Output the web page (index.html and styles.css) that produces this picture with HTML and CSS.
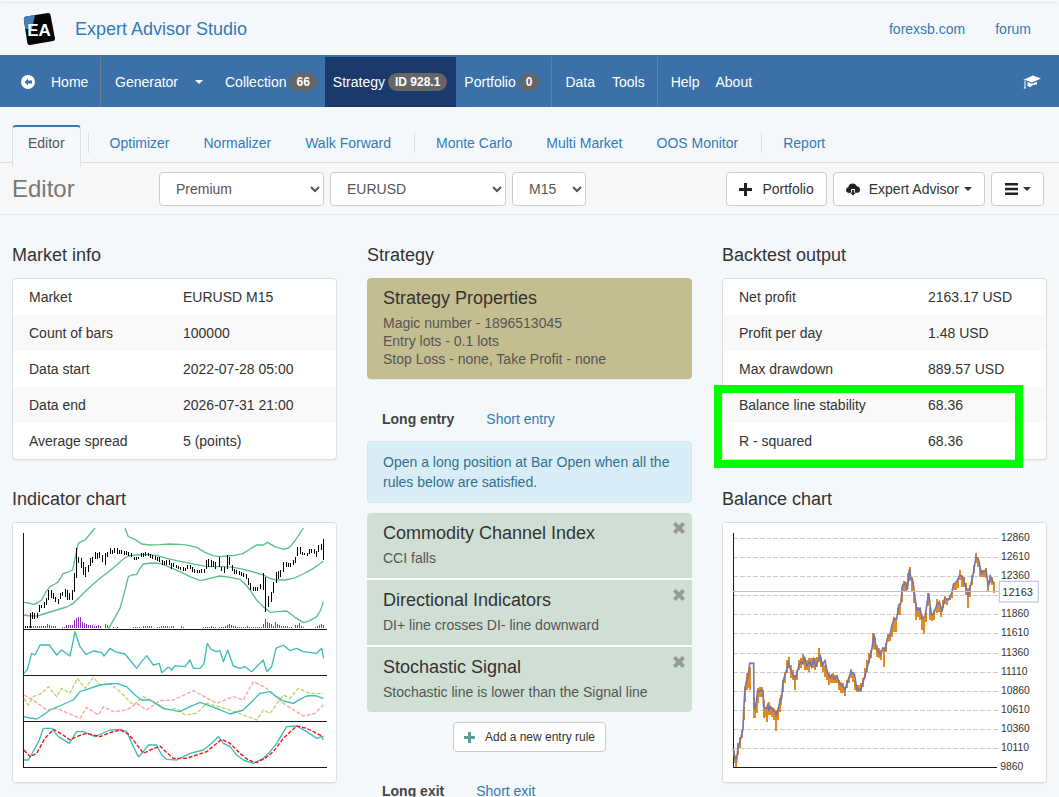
FILE: index.html
```html
<!DOCTYPE html>
<html lang="en">
<head>
  <meta charset="UTF-8">
  <meta name="viewport" content="width=device-width, initial-scale=1.0">
  <title>Expert Advisor Studio</title>
  <link rel="stylesheet" href="styles.css">
</head>
<body>
  <div class="header">
    <svg class="logo" width="34" height="36" viewBox="0 0 34 36">
      <path d="M4 5.500 L26 2 Q28 1.700 28.500 4 L33 27.500 Q33.300 29.500 31 30 L8 34 Q5.800 34.300 5.300 32 L1.800 8 Q1.600 6 4 5.500 Z" fill="#050505"/>
      <path d="M4 5.500 L13 4 L10 18 L3.400 18 L1.800 8 Q1.600 6 4 5.500 Z" fill="#4a7fb5"/>
      <text x="17" y="24.500" class="logo-text">EA</text>
    </svg>
    <a class="brand" href="#">Expert Advisor Studio</a>
    <a class="header-link" href="#">forexsb.com</a>
    <a class="header-link" href="#">forum</a>
  </div>

  <div class="nav">
    <a class="nav-home" href="#">
      <svg width="14" height="14" viewBox="0 0 14 14">
        <circle cx="7" cy="7" r="7" fill="#fff"/>
        <path d="M7 3.500 L3.500 7 L7 10.500 V8.400 H11 V5.600 H7 Z" fill="#3b71a8"/>
      </svg>
      Home
    </a>
    <a class="nav-generator" href="#">Generator <span class="nav-caret"></span></a>
    <a class="nav-item" href="#">Collection <span class="badge">66</span></a>
    <a class="nav-item active" href="#">Strategy <span class="badge">ID 928.1</span></a>
    <a class="nav-item nav-end" href="#">Portfolio <span class="badge">0</span></a>
    <a class="nav-item nav-data" href="#">Data</a>
    <a class="nav-item nav-tools" href="#">Tools</a>
    <a class="nav-item nav-help" href="#">Help</a>
    <a class="nav-item nav-about" href="#">About</a>
    <svg class="nav-cap" width="18" height="14" viewBox="0 0 18 14">
      <path d="M0 5 L10 0.500 L18 3.500 L9 7.500 L3 5.300 Z" fill="#fff"/>
      <path d="M4.500 7 L9 8.800 L14 6.800 V9.600 Q10 9.500 7 12 L4.500 11 Z" fill="#fff"/>
      <path d="M1.500 5.500 V12 L0.500 13.500 H3 L2.500 12 V6 Z" fill="#fff"/>
    </svg>
  </div>

  <div class="tabs">
    <a class="tab active" href="#">Editor</a>
    <span class="tab-sep"></span>
    <a class="tab" href="#">Optimizer</a>
    <a class="tab" href="#">Normalizer</a>
    <a class="tab" href="#">Walk Forward</a>
    <span class="tab-sep"></span>
    <a class="tab" href="#">Monte Carlo</a>
    <a class="tab" href="#">Multi Market</a>
    <a class="tab" href="#">OOS Monitor</a>
    <span class="tab-sep"></span>
    <a class="tab" href="#">Report</a>
  </div>

  <div class="toolbar">
    <div class="toolbar-title">Editor</div>
    <select class="select select-server"><option>Premium</option></select>
    <select class="select select-symbol"><option>EURUSD</option></select>
    <select class="select select-period"><option>M15</option></select>
    <div class="toolbar-buttons">
      <button class="btn">
        <svg width="13" height="13" viewBox="0 0 13 13"><path d="M5 0 H8 V5 H13 V8 H8 V13 H5 V8 H0 V5 H5 Z" fill="#222"/></svg>
        <span class="btn-label">Portfolio</span>
      </button>
      <button class="btn btn-upload">
        <svg width="14" height="14" viewBox="0 0 15 14">
          <path d="M3.500 11 Q0 11 0 8 Q0 5.500 2.500 5.200 Q3 1 7 1 Q10.500 1 11.500 4 Q15 4.200 15 7.700 Q15 11 11.500 11 H9.500 V7 H5.500 V11 Z" fill="#222"/>
          <path d="M6.500 8 H8.500 V11 H10.500 L7.500 14 L4.500 11 H6.500 Z" fill="#222"/>
        </svg>
        <span class="btn-label">Expert Advisor</span>
        <span class="caret"></span>
      </button>
      <button class="btn btn-menu">
        <svg width="13" height="12" viewBox="0 0 13 12"><path d="M0 0 H13 V2.500 H0 Z M0 4.700 H13 V7.200 H0 Z M0 9.400 H13 V11.900 H0 Z" fill="#222"/></svg>
        <span class="caret"></span>
      </button>
    </div>
  </div>

  <div class="main">
    <div class="column">
      <h4>Market info</h4>
      <div class="card">
        <table class="info info-market">
          <tr><td>Market</td><td>EURUSD M15</td></tr>
          <tr><td>Count of bars</td><td>100000</td></tr>
          <tr><td>Data start</td><td>2022-07-28 05:00</td></tr>
          <tr><td>Data end</td><td>2026-07-31 21:00</td></tr>
          <tr><td>Average spread</td><td>5 (points)</td></tr>
        </table>
      </div>

      <h4 class="chart-title">Indicator chart</h4>
      <div class="card">
        <svg class="chart" width="323" height="259" viewBox="39 39 969 777">
          <path class="volume" d="M75 358v-8M81 358v-8M87 358v-8M93 358v-6M99 358v-6M105 358v-6M111 358v-6M117 358v-6M123 358v-6M129 358v-6M135 358v-6M142 358v-12M148 358v-9M154 358v-7M160 358v-7M166 358v-6M186 358v-5M192 358v-5M198 358v-11M204 358v-11M210 358v-10M216 358v-9M222 358v-25M228 358v-30M234 358v-33M240 358v-33M246 358v-20M252 358v-17M258 358v-13M264 358v-10M270 358v-9M276 358v-9M282 358v-6M288 358v-7M294 358v-9M300 358v-7M317 358v-12M323 358v-9M329 358v-6M340 358v-5M352 358v-5M401 358v-3M407 358v-3M413 358v-3M419 358v-3M431 358v-6M437 358v-6M443 358v-6M449 358v-6M455 358v-6M473 358v-5M479 358v-5M485 358v-6M491 358v-8M497 358v-6M503 358v-6M509 358v-5M515 358v-8M521 358v-6M545 358v-8M551 358v-5M611 358v-5M617 358v-5M623 358v-5M629 358v-5M635 358v-8M641 358v-5M647 358v-5M659 358v-5M665 358v-5M671 358v-5M677 358v-6M683 358v-9M689 358v-14M695 358v-9M701 358v-7M707 358v-6M713 358v-5M719 358v-5M725 358v-5M731 358v-5M737 358v-5M743 358v-7M749 358v-5M755 358v-5M761 358v-5M767 358v-5M773 358v-5M779 358v-5M785 358v-5M791 358v-13M797 358v-27M803 358v-18M809 358v-16M815 358v-12M821 358v-8M827 358v-20M833 358v-13M839 358v-9M845 358v-8M851 358v-8M857 358v-8M863 358v-8M869 358v-5M875 358v-5M887 358v-9M893 358v-10M899 358v-15M905 358v-8M911 358v-5M947 358v-5M953 358v-6M959 358v-9M965 358v-14M971 358v-10"/>
          <g class="bands">
            <polyline points="72,277 85,279 100,283 112,279 125,270 138,245 150,230 165,222 175,215 190,190 205,186 218,180 226,140 235,100 245,94 255,90 270,72 285,54"/>
            <polyline points="375,54 385,80 405,88 425,102 450,105 480,104 510,102 540,103 565,106 590,112 615,127 640,137 660,140 680,138 705,136 730,130 750,117 770,105 790,105 802,97 825,110 850,118 865,114 875,105 890,85 910,54"/>
            <polyline points="72,315 90,318 110,318 140,309 170,300 200,291 220,280 240,260 260,240 280,222 300,205 325,186 350,165 370,147 385,138 410,135 440,133 470,136 500,145 530,152 560,158 590,164 620,170 650,170 680,170 705,173 730,178 760,186 790,195 810,205 830,210 855,210 880,205 910,192 940,175 955,165 970,153"/>
            <polyline points="325,358 345,322 360,295 375,240 385,200 395,195 410,193 420,175 430,162 455,159 480,160 510,172 540,185 570,200 600,212 630,205 660,198 690,202 720,208 738,225 750,240 770,270 790,290 810,307 835,305 860,303 885,322 910,338 930,332 950,320 962,300 970,275"/>
          </g>
          <path class="candles" d="M75 347v7M83 347v7M90 310v45M97 305v22M104 308v18M111 308v16M118 285v20M125 285v10M132 275v18M139 265v20M146 240v30M153 240v25M160 250v18M167 262v14M174 268v15M181 248v20M188 245v12M195 238v24M202 240v30M209 248v22M216 240v30M222 190v55M229 115v90M236 140v20M243 145v30M250 155v40M257 170v32M264 165v20M271 145v22M278 140v20M285 125v22M292 128v18M299 127v18M306 135v20M316 130v35M323 125v15M330 114v18M337 120v12M344 114v16M351 115v18M358 120v12M365 120v12M372 122v12M379 124v10M386 127v10M393 130v10M402 140v10M409 142v8M416 140v8M423 130v10M430 128v12M437 125v12M444 128v10M451 133v12M458 136v12M465 138v12M472 140v12M479 140v16M486 150v14M493 152v12M500 150v14M507 150v16M514 160v16M521 160v12M528 165v10M535 168v10M542 170v10M549 172v12M556 174v10M563 165v12M570 165v12M577 170v16M584 176v12M591 180v10M598 180v10M605 178v12M612 176v14M619 150v26M626 148v24M633 150v20M640 152v20M647 155v22M658 142v30M665 170v12M672 172v16M682 136v40M689 140v26M696 165v18M703 178v14M710 180v12M717 182v12M724 185v12M731 190v12M738 192v14M745 205v20M752 220v20M759 230v14M766 232v12M773 230v12M780 222v16M790 190v50M797 200v105M806 258v32M814 245v30M821 215v35M828 185v35M835 182v24M842 180v22M851 155v30M858 155v15M865 158v12M872 160v10M880 150v14M886 140v20M893 112v25M900 110v22M907 125v10M914 128v8M921 128v10M928 118v14M935 118v10M942 116v16M949 122v18M956 105v20M963 102v18M970 88v62"/>
          <path class="axes" d="M70 70V772M70 358H980M70 496H980M70 634H980M70 772H980"/>
          <polyline class="line line-teal" points="72,490 82,478 95,430 105,435 120,405 148,405 170,435 185,420 210,438 218,400 225,365 240,410 258,433 280,423 305,428 312,438 330,415 345,425 375,432 410,475 425,455 440,437 460,465 478,460 485,488 505,472 515,480 525,467 555,470 570,450 580,475 600,475 612,460 622,400 632,417 648,425 660,422 670,455 683,420 700,468 720,475 735,470 755,485 790,450 800,485 815,470 828,415 850,405 870,422 890,415 910,425 950,430 965,415 971,445"/>
          <polyline class="line line-green" points="72,565 85,585 100,560 125,550 145,530 170,560 185,535 210,550 232,505 255,535 280,502 300,525 330,520 360,545 400,585 430,560 470,580 500,600 530,595 555,615 590,610 620,580 690,600 770,630 790,600 810,610 850,555 870,565 895,535 930,550 970,550"/>
          <polyline class="line line-salmon" points="72,555 100,570 140,600 170,595 240,625 260,592 295,615 310,590 340,605 380,600 410,580 440,600 480,572 520,570 580,542 650,580 700,560 730,570 760,515 800,535 850,580 910,618 945,610 970,585"/>
          <polyline class="line line-teal" points="72,620 90,624 110,627 130,615 150,600 185,585 220,570 240,545 270,535 300,525 350,520 380,530 405,555 425,570 450,570 490,595 540,605 570,590 600,577 650,595 690,612 730,600 755,575 780,550 810,545 830,560 850,573 880,580 900,568 920,558 945,557 970,565"/>
          <polyline class="line line-teal" points="72,750 85,750 105,715 118,690 130,655 155,655 175,680 208,700 230,665 250,665 285,680 330,660 360,658 380,665 400,710 415,740 430,725 445,705 470,705 485,735 500,748 530,750 570,730 610,720 635,700 655,680 670,700 690,710 710,735 730,750 760,760 790,745 810,725 830,700 860,650 890,648 920,665 950,685 965,680 970,690"/>
          <polyline class="line line-red" points="72,720 90,740 110,730 135,685 160,658 185,672 210,690 235,678 260,670 300,680 330,668 360,660 385,672 400,690 430,730 455,718 480,708 500,728 520,745 560,745 590,735 620,725 665,688 690,700 720,730 745,750 770,758 795,745 820,725 850,685 890,648 920,655 950,670 970,680"/>
        </svg>
      </div>
    </div>

    <div class="column">
      <h4>Strategy</h4>
      <div class="properties">
        <div class="panel-title">Strategy Properties</div>
        <div class="properties-text">Magic number - 1896513045</div>
        <div class="properties-text">Entry lots - 0.1 lots</div>
        <div class="properties-text">Stop Loss - none, Take Profit - none</div>
      </div>

      <div class="side-tabs">
        <b class="side-active">Long entry</b>
        <a href="#">Short entry</a>
      </div>
      <div class="alert">Open a long position at Bar Open when all the rules below are satisfied.</div>

      <div class="rules">
        <div class="rule">
          <div class="panel-title">Commodity Channel Index</div>
          <div class="rule-text">CCI falls</div>
          <svg class="rule-close" width="12" height="12" viewBox="0 0 12 12"><path d="M2.800 0 L6 3.200 L9.200 0 L12 2.800 L8.800 6 L12 9.200 L9.200 12 L6 8.800 L2.800 12 L0 9.200 L3.200 6 L0 2.800 Z"/></svg>
        </div>
        <div class="rule">
          <div class="panel-title">Directional Indicators</div>
          <div class="rule-text">DI+ line crosses DI- line downward</div>
          <svg class="rule-close" width="12" height="12" viewBox="0 0 12 12"><path d="M2.800 0 L6 3.200 L9.200 0 L12 2.800 L8.800 6 L12 9.200 L9.200 12 L6 8.800 L2.800 12 L0 9.200 L3.200 6 L0 2.800 Z"/></svg>
        </div>
        <div class="rule">
          <div class="panel-title">Stochastic Signal</div>
          <div class="rule-text">Stochastic line is lower than the Signal line</div>
          <svg class="rule-close" width="12" height="12" viewBox="0 0 12 12"><path d="M2.800 0 L6 3.200 L9.200 0 L12 2.800 L8.800 6 L12 9.200 L9.200 12 L6 8.800 L2.800 12 L0 9.200 L3.200 6 L0 2.800 Z"/></svg>
        </div>
      </div>

      <div class="add-row">
        <button class="btn btn-small">
          <svg width="11" height="11" viewBox="0 0 11 11"><path d="M4 0 H7 V4 H11 V7 H7 V11 H4 V7 H0 V4 H4 Z" fill="#5f9ea0"/></svg>
          <span class="btn-label">Add a new entry rule</span>
        </button>
      </div>

      <div class="side-tabs">
        <b class="side-active">Long exit</b>
        <a href="#">Short exit</a>
      </div>
    </div>

    <div class="column">
      <h4>Backtest output</h4>
      <div class="card">
        <table class="info info-backtest">
          <tr><td>Net profit</td><td>2163.17 USD</td></tr>
          <tr><td>Profit per day</td><td>1.48 USD</td></tr>
          <tr><td>Max drawdown</td><td>889.57 USD</td></tr>
          <tr><td>Balance line stability</td><td>68.36</td></tr>
          <tr><td>R - squared</td><td>68.36</td></tr>
        </table>
      </div>

      <h4 class="chart-title">Balance chart</h4>
      <div class="card">
        <svg class="chart" width="323" height="259" viewBox="39 39 969 777">
          <path class="grid" d="M70 85H865M70 142H865M70 199H865M70 256H865M70 313H865M70 370H865M70 430H865M70 487H865M70 544H865M70 601H865M70 658H865M70 715H865"/>
          <path class="balance-ticks" d="M72 720v40M78 735v37M84 700v35M90 680v35M96 660v25M102 590v40M106 530v45M111 490v50M116 480v55M120 470v70M131 560v65M135 585v40M140 570v40M144 535v45M150 530v30M156 530v30M161 570v55M166 590v30M171 590v45M176 575v40M181 590v25M186 590v30M192 595v35M197 600v62M203 595v35M209 565v40M214 555v30M220 510v35M226 485v35M232 450v40M238 440v35M244 465v40M250 480v30M256 495v45M262 480v30M268 450v30M274 445v30M280 432v30M286 445v35M292 450v30M298 445v40M304 445v25M310 445v30M316 445v35M322 440v30M328 415v40M334 440v30M340 455v30M346 465v35M352 480v30M358 490v35M364 495v25M370 490v30M376 495v25M382 495v25M388 510v30M394 515v35M400 520v30M406 530v28M412 510v25M418 500v20M424 478v25M430 490v25M436 510v30M442 525v20M448 525v22M454 520v25M460 505v25M466 475v30M472 450v35M478 430v30M484 420v25M490 368v50M496 385v35M502 405v35M508 415v30M514 420v30M522 410v62M528 400v25M534 372v25M540 372v22M546 345v35M552 320v45M558 325v40M564 295v20M570 280v35M576 230v45M582 212v30M588 215v28M594 190v35M600 172v40M606 200v45M612 245v35M618 280v50M624 290v30M630 295v35M636 315v45M641 325v46M648 305v30M655 248v40M661 290v40M667 310v22M673 300v30M680 268v40M686 275v30M694 290v30M700 270v25M706 258v25M712 265v20M720 255v15M726 245v20M732 220v20M738 215v25M744 205v30M750 180v30M756 195v35M762 200v30M768 220v35M774 235v58M780 225v35M786 195v30M792 165v25M798 130v30M804 140v30M810 170v30M816 180v22M822 180v20M828 175v30M834 210v32M840 195v25M846 200v25M851 215v35"/>
          <path class="axes-line" d="M70 70V772H862"/>
          <polyline class="balance-line" points="70,715 73,740 80,752 84,710 90,695 95,675 99,655 101,605 105,535 111,505 115,495 119,460 131,460 132,590 135,595 139,575 143,542 149,545 154,538 159,542 161,590 169,597 173,585 177,600 181,590 187,598 193,605 199,615 204,600 211,570 215,565 219,515 225,495 230,480 235,458 241,478 247,492 255,505 261,490 267,465 273,455 279,462 283,440 291,468 299,455 305,470 311,448 317,468 325,450 331,438 337,465 345,452 351,482 359,503 365,495 373,507 381,500 389,522 399,528 405,540 411,520 423,485 433,492 441,538 453,538 463,503 471,475 479,445 485,420 492,372 498,410 505,425 512,435 518,415 526,420 532,385 540,375 545,350 552,325 560,328 566,285 572,282 578,225 586,218 592,240 598,178 603,205 608,210 614,255 620,300 630,295 636,325 645,320 656,250 664,315 672,310 680,285 688,275 696,305 704,265 715,270 725,250 730,225 740,215 750,195 760,205 768,235 775,260 782,225 790,190 798,140 806,150 814,190 828,180 835,230 842,200 851,220"/>
          <path class="cross-line" d="M70 244H868"/>
          <rect class="cross-box" x="868" y="214" width="117" height="62"/>
          <g class="chart-label">
            <text x="873" y="93">12860</text>
            <text x="873" y="150">12610</text>
            <text x="873" y="207">12360</text>
            <text x="873" y="321">11860</text>
            <text x="873" y="378">11610</text>
            <text x="873" y="438">11360</text>
            <text x="873" y="495">11110</text>
            <text x="873" y="552">10860</text>
            <text x="873" y="609">10610</text>
            <text x="873" y="666">10360</text>
            <text x="873" y="723">10110</text>
            <text x="871" y="780">9860</text>
          </g>
          <text class="cross-label" x="877" y="257">12163</text>
        </svg>
      </div>
    </div>
  </div>

  <div class="highlight"></div>
</body>
</html>
```

FILE: styles.css
```css
html, body {
  margin: 0;
  padding: 0;
  height: 100%;
  overflow: hidden;
}
body {
  position: relative;
  font-family: "Liberation Sans", Arial, sans-serif;
  font-size: 14px;
  line-height: 20px;
  color: #333;
  background-color: #f4f8fb;
}
a {
  color: #337ab7;
  text-decoration: none;
}

/* header */
.header {
  display: flex;
  align-items: center;
  height: 52px;
  margin-top: 2px;
  border-top: 1px solid #e3e6e8;
  border-radius: 4px 4px 0 0;
  padding-left: 22px;
  padding-right: 28px;
}
.logo {
  flex-shrink: 0;
}
.logo-text {
  font-size: 17px;
  font-weight: bold;
  fill: #fff;
  text-anchor: middle;
}
.brand {
  font-size: 18px;
  margin-left: 19px;
  margin-right: auto;
}
.header-link {
  margin-left: 30px;
}

/* main nav */
.nav {
  display: flex;
  align-items: stretch;
  height: 52px;
  box-sizing: border-box;
  padding-top: 2px;
  background-color: #3b71a8;
}
.nav a {
  display: flex;
  align-items: center;
  color: #fff;
}
.nav-home {
  gap: 16px;
  width: 79px;
  padding-left: 21px;
  border-right: 1px solid #6d7f8c;
}
.nav-home svg {
  flex-shrink: 0;
}
.nav-generator {
  padding-left: 14px;
  width: 110px;
}
.nav-caret {
  display: inline-block;
  margin-left: 17px;
  border-top: 4px solid #fff;
  border-left: 4px solid transparent;
  border-right: 4px solid transparent;
}
.nav-item {
  padding-right: 8px;
}
.nav-item.active {
  background-color: #1b3a6b;
  padding: 0 9px 0 8px;
}
.nav-end {
  padding-left: 8px;
  padding-right: 12px;
  border-right: 1px solid #6d7f8c;
}
.nav-data {
  padding-left: 13px;
  padding-right: 17px;
}
.nav-tools {
  padding-right: 12px;
  border-right: 1px solid #6d7f8c;
}
.nav-help {
  padding-left: 13px;
  padding-right: 16px;
}
.nav-cap {
  margin-left: auto;
  margin-right: 18px;
  align-self: center;
}
.badge {
  font-size: 12px;
  font-weight: bold;
  line-height: 18px;
  padding: 0 7px;
  margin-left: 3px;
  color: #fff;
  background-color: #666;
  border-radius: 9px;
}

/* tabs */
.tabs {
  display: flex;
  align-items: flex-start;
  height: 56px;
  box-sizing: border-box;
  padding: 18px 0 0 12px;
  border-bottom: 1px solid #ddd;
}
.tab {
  padding: 6px 15px 10px;
  border: 1px solid transparent;
  border-top-width: 2px;
  border-bottom: none;
  margin-right: 2px;
}
.tab.active {
  color: #555;
  background-color: #f4f8fb;
  border-color: #ddd;
  border-top-color: #337ab7;
  border-radius: 4px 4px 0 0;
  height: 23px;
  border-bottom: 1px solid #f4f8fb;
}
.tab-sep {
  width: 1px;
  height: 20px;
  margin: 8px 5px 0;
  background-color: #ddd;
}

/* toolbar */
.toolbar {
  display: flex;
  align-items: center;
  gap: 6px;
  height: 52px;
  box-sizing: border-box;
  padding: 1px 15px 0 12px;
  background-color: #f7f7f7;
  border-bottom: 1px solid #e7e7e7;
}
.toolbar-title {
  font-size: 24px;
  color: #777;
  width: 141px;
}
.select {
  height: 34px;
  padding: 0 12px;
  font-family: inherit;
  font-size: 14px;
  color: #555;
  background-color: #fff;
  border: 1px solid #ccc;
  border-radius: 4px;
}
.select-server {
  width: 165px;
}
.select-symbol {
  width: 176px;
}
.select-period {
  width: 74px;
}
.toolbar-buttons {
  display: flex;
  gap: 6px;
  margin-left: auto;
}
.btn {
  display: flex;
  align-items: center;
  height: 34px;
  padding: 0 12px;
  font-family: inherit;
  font-size: 14px;
  color: #333;
  background-color: #fff;
  border: 1px solid #ccc;
  border-radius: 4px;
}
.btn-label {
  margin-left: 10px;
}
.btn-upload .btn-label {
  margin-left: 9px;
}
.caret {
  margin-left: 5px;
  border-top: 4px solid #333;
  border-left: 4px solid transparent;
  border-right: 4px solid transparent;
}
.btn-menu {
  padding-left: 13px;
}
.btn-small {
  height: 30px;
  padding: 0 10px;
  font-size: 12px;
}

/* three columns */
.main {
  display: grid;
  grid-template-columns: 325px 325px 325px;
  gap: 30px;
  padding: 30px 12px 0;
}
.column h4 {
  font-size: 18px;
  font-weight: normal;
  line-height: 20px;
  margin: 0 0 13px;
}
.column h4.chart-title {
  margin-top: 29px;
}
.card {
  background-color: #fff;
  border: 1px solid #ddd;
  border-radius: 4px;
  box-shadow: 0 1px 1px rgba(0,0,0,0.05);
  overflow: hidden;
}
.chart {
  display: block;
  background-color: #fff;
}

/* info tables */
.info {
  width: 100%;
  border-collapse: collapse;
}
.info td {
  padding: 8px 0 8px 16px;
}
.info tr:nth-child(even) {
  background-color: #f9f9f9;
}
.info-market td:first-child {
  width: 138px;
}
.info-backtest td:first-child {
  width: 173px;
}

/* chart lines */
.bands polyline {
  fill: none;
  stroke: #5dbf8c;
  stroke-width: 4;
  stroke-linejoin: round;
}
.volume {
  fill: none;
  stroke: #8a2fc4;
  stroke-width: 3;
  shape-rendering: crispEdges;
  transform: translateY(-3px);
}
.candles {
  fill: none;
  stroke: #000;
  stroke-width: 3;
  shape-rendering: crispEdges;
}
.axes,
.axes-line {
  fill: none;
  stroke: #1a1a1a;
  stroke-width: 3;
  shape-rendering: crispEdges;
}
.line {
  fill: none;
  stroke-width: 4;
  stroke-linejoin: round;
}
.line-teal {
  stroke: #3dbdb5;
}
.line-green {
  stroke: #b5d56a;
  stroke-dasharray: 12 5;
}
.line-salmon {
  stroke: #ffa49a;
  stroke-dasharray: 12 5;
}
.line-red {
  stroke: #f01010;
  stroke-dasharray: 12 5;
}
.grid {
  fill: none;
  stroke: #ccc;
  stroke-width: 3;
  stroke-dasharray: 14 6;
  shape-rendering: crispEdges;
}
.balance-ticks {
  fill: none;
  stroke: #e58a1f;
  stroke-width: 6;
  shape-rendering: crispEdges;
}
.balance-line {
  fill: none;
  stroke: #7777ad;
  stroke-width: 5;
}
.cross-line {
  stroke: #b4bedd;
  stroke-width: 3;
  shape-rendering: crispEdges;
}
.cross-box {
  fill: #fff;
  stroke: #c2cae6;
  stroke-width: 4;
}
.chart-label text {
  font-size: 31px;
  fill: #333;
}
.cross-label {
  font-size: 33px;
  fill: #333;
}

/* strategy column */
.properties {
  background-color: #c4bd8f;
  border: 1px solid #c0bb98;
  border-radius: 4px;
  padding: 8px 15px 10px;
  box-shadow: 0 1px 1px rgba(0,0,0,0.05);
}
.panel-title {
  font-size: 18px;
  line-height: 22px;
}
.properties .panel-title {
  margin-bottom: 5px;
}
.properties-text {
  line-height: 18px;
  color: #555;
}
.side-tabs {
  display: flex;
  gap: 32px;
  margin-top: 30px;
  padding-left: 15px;
}
.side-active {
  color: #444;
}
.add-row + .side-tabs {
  margin-top: 29px;
}
.alert {
  margin-top: 12px;
  padding: 10px 15px;
  color: #31708f;
  background-color: #d9edf7;
  border: 1px solid #d3e6ef;
  border-radius: 4px;
}
.rules {
  display: flex;
  flex-direction: column;
  gap: 2px;
  margin-top: 10px;
  background-color: #fff;
  border-radius: 4px;
}
.rule {
  position: relative;
  height: 65px;
  box-sizing: border-box;
  padding: 9px 16px 0;
  background-color: #d0dfd3;
}
.rule:first-child {
  border-radius: 4px 4px 0 0;
}
.rule:last-child {
  border-radius: 0 0 4px 4px;
}
.rule-text {
  margin-top: 4px;
  color: #555;
}
.rule-close {
  position: absolute;
  top: 9px;
  right: 7px;
  fill: #999;
}
.add-row {
  display: flex;
  justify-content: center;
  margin-top: 10px;
}

/* green marker drawn over the backtest table */
.highlight {
  position: absolute;
  left: 714px;
  top: 385px;
  width: 293px;
  height: 67px;
  border: 8px solid #00ff00;
}
```
